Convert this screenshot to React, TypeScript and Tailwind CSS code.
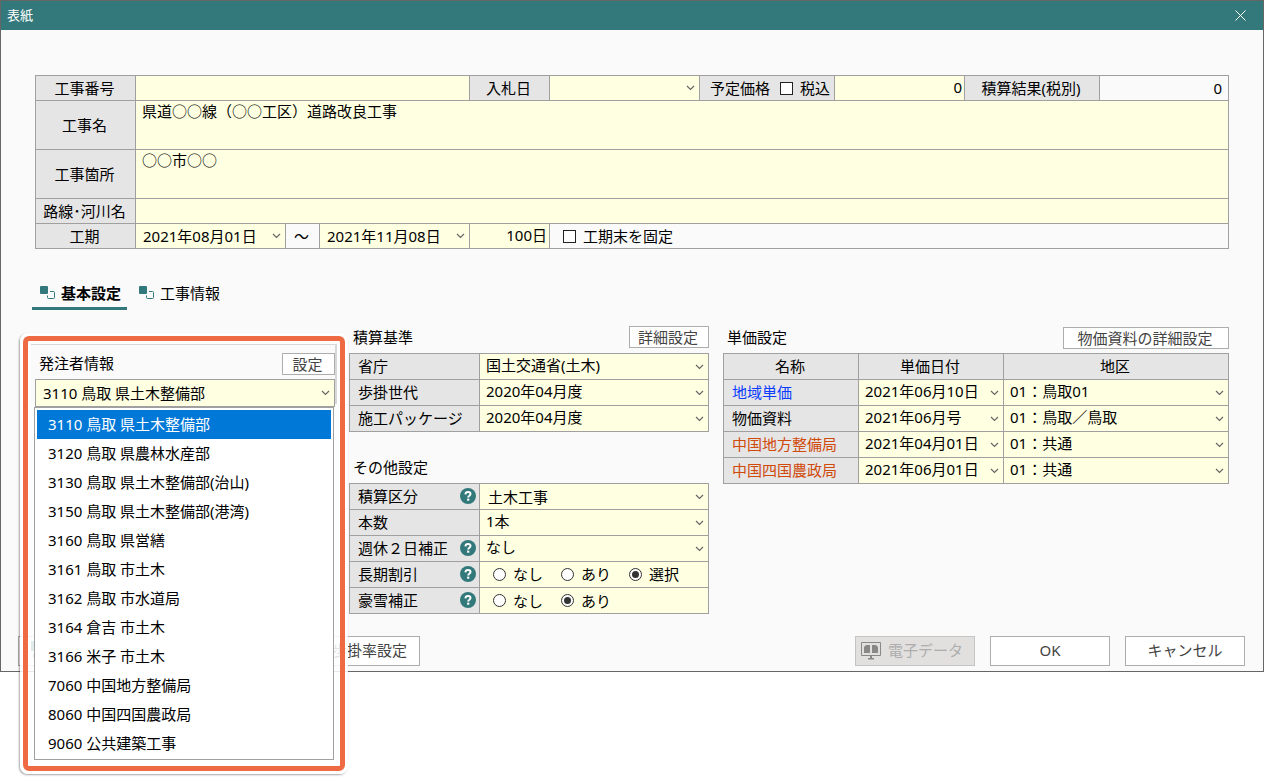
import type { ReactNode } from 'react';

const issuers = [
  '3110 鳥取 県土木整備部',
  '3120 鳥取 県農林水産部',
  '3130 鳥取 県土木整備部(治山)',
  '3150 鳥取 県土木整備部(港湾)',
  '3160 鳥取 県営繕',
  '3161 鳥取 市土木',
  '3162 鳥取 市水道局',
  '3164 倉吉 市土木',
  '3166 米子 市土木',
  '7060 中国地方整備局',
  '8060 中国四国農政局',
  '9060 公共建築工事'
];

const standards = [
  { id: 'ministry', label: '省庁', value: '国土交通省(土木)' },
  { id: 'generation', label: '歩掛世代', value: '2020年04月度' },
  { id: 'package', label: '施工パッケージ', value: '2020年04月度' }
];

const prices = [
  { name: '地域単価', color: 'text-[#0a3cff]', date: '2021年06月10日', area: '01：鳥取01' },
  { name: '物価資料', color: 'text-black', date: '2021年06月号', area: '01：鳥取／鳥取' },
  { name: '中国地方整備局', color: 'text-[#d04a0a]', date: '2021年04月01日', area: '01：共通' },
  { name: '中国四国農政局', color: 'text-[#d04a0a]', date: '2021年06月01日', area: '01：共通' }
];

function Chevron() {
  return (
    <svg className="pointer-events-none absolute right-1 top-1/2 -translate-y-1/2" width="9" height="8" viewBox="0 0 9 8" fill="none" stroke="#666" strokeWidth="1.2">
      <path d="M1 2l3.5 3.5L8 2" />
    </svg>
  );
}

interface PickProps {
  id?: string;
  label?: string;
  value: string;
  options?: string[];
  className?: string;
}

function Pick({ id, label, value, options, className = 'pb-[3px] pl-[6px]' }: PickProps) {
  return (
    <div className="relative h-full w-full bg-[#ffffe1]">
      <select
        id={id}
        aria-label={label}
        defaultValue={value}
        className={`block h-full w-full appearance-none bg-transparent pr-4 outline-none ${className}`}
      >
        {(options ?? [value]).map((o) => (
          <option key={o}>{o}</option>
        ))}
      </select>
      <Chevron />
    </div>
  );
}

function Head({ htmlFor, className = '', children }: { htmlFor?: string; className?: string; children: ReactNode }) {
  return (
    <label htmlFor={htmlFor} className={`flex shrink-0 items-center justify-center bg-[#e5e5e5] pb-px pr-[2px] ${className}`}>
      {children}
    </label>
  );
}

function Check({ label, className = '' }: { label: string; className?: string }) {
  return (
    <label className={`flex items-center gap-[7px] ${className}`}>
      <input type="checkbox" className="size-[13px] appearance-none border border-[#222] bg-white" />
      {label}
    </label>
  );
}

function Radio({ name, label, checked = false }: { name: string; label: string; checked?: boolean }) {
  return (
    <label className="flex w-[68px] items-center gap-[7px]">
      <span className="grid size-[13px] shrink-0 place-items-center rounded-full border border-[#333] bg-white">
        <input type="radio" name={name} defaultChecked={checked} className="size-[7px] appearance-none rounded-full checked:bg-[#333]" />
      </span>
      {label}
    </label>
  );
}

function SmallButton({ className = '', children }: { className?: string; children: ReactNode }) {
  return (
    <button type="button" className={`h-[22px] border border-[#adadad] bg-white pr-[2px] leading-5 text-[#444] ${className}`}>
      {children}
    </button>
  );
}

function Help() {
  return (
    <button type="button" aria-label="ヘルプ" className="mr-[3px]">
      <svg width="16" height="16" viewBox="0 0 16 16">
        <circle cx="8" cy="8" r="8" fill="#33797b" />
        <path d="M5.4 6.4C5.500 4.700 6.600 4 8 4c1.500 0 2.500.8 2.500 2 0 1.700-2.300 1.700-2.300 3.400" fill="none" stroke="#fff" strokeWidth="2" />
        <rect x="7.1" y="10.600" width="2.200" height="2.100" fill="#fff" />
      </svg>
    </button>
  );
}

function SettingRow({ id, label, help = false, children }: { id?: string; label: string; help?: boolean; children: ReactNode }) {
  return (
    <div className="flex h-[25px] gap-px">
      <div className="flex w-[129px] shrink-0 items-center justify-between bg-[#e5e5e5] pb-[2px] pl-2">
        <label htmlFor={id}>{label}</label>
        {help && <Help />}
      </div>
      <div className="flex min-w-0 flex-1 items-center bg-[#ffffe1]">{children}</div>
    </div>
  );
}

function TabIcon() {
  return (
    <svg width="16" height="14" viewBox="0 0 16 14">
      <rect x="0" y="0" width="8" height="8" rx="1" fill="#33797b" />
      <path d="M10 5.500h3.500a1 1 0 0 1 1 1v5a1 1 0 0 1-1 1h-5a1 1 0 0 1-1-1V9.500" fill="none" stroke="#33797b" />
    </svg>
  );
}

function TitleBar() {
  return (
    <header className="flex h-[29px] items-center justify-between bg-[#33797b] pb-px pl-[6px] pr-[17px] text-[13px] text-white">
      <h1>表紙</h1>
      <button type="button" aria-label="閉じる">
        <svg width="11" height="11" viewBox="0 0 11 11" stroke="#fff" strokeWidth="1">
          <path d="M.5.5l10 10M10.500.5l-10 10" />
        </svg>
      </button>
    </header>
  );
}

function ProjectForm() {
  return (
    <section className="flex flex-col gap-px bg-[#a0a0a0] p-px">
      <div className="flex h-6 gap-px">
        <Head htmlFor="number" className="w-[99px]">工事番号</Head>
        <input id="number" className="min-w-0 flex-1 bg-[#ffffe1] px-[6px] outline-none" />
        <Head htmlFor="bid" className="w-[79px]">入札日</Head>
        <div className="w-[149px]">
          <Pick id="bid" value="" />
        </div>
        <div className="flex w-[134px] items-center justify-between bg-[#e5e5e5] pl-[10px] pr-1">
          <label htmlFor="planned">予定価格</label>
          <Check label="税込" />
        </div>
        <input id="planned" defaultValue="0" className="w-[129px] bg-[#ffffe1] px-[2px] pb-[2px] text-right outline-none" />
        <Head className="w-[134px]">積算結果(税別)</Head>
        <output className="flex w-32 items-center justify-end bg-[#fafafa] pr-[6px]">0</output>
      </div>
      <div className="flex h-12 gap-px">
        <Head htmlFor="title" className="w-[99px]">工事名</Head>
        <textarea id="title" defaultValue="県道○○線（○○工区）道路改良工事" className="min-w-0 flex-1 resize-none bg-[#ffffe1] px-[6px] leading-5 outline-none" />
      </div>
      <div className="flex h-12 gap-px">
        <Head htmlFor="place" className="w-[99px]">工事箇所</Head>
        <textarea id="place" defaultValue="○○市○○" className="min-w-0 flex-1 resize-none bg-[#ffffe1] px-[6px] leading-5 outline-none" />
      </div>
      <div className="flex h-6 gap-px">
        <Head htmlFor="route" className="w-[99px]">路線･河川名</Head>
        <input id="route" className="min-w-0 flex-1 bg-[#ffffe1] px-[6px] outline-none" />
      </div>
      <div className="flex h-6 gap-px">
        <Head htmlFor="from" className="w-[99px]">工期</Head>
        <div className="w-[149px]">
          <Pick id="from" value="2021年08月01日" className="pl-[7px]" />
        </div>
        <span className="flex w-[33px] items-center justify-center bg-[#fafafa] pr-[2px]">～</span>
        <div className="w-[149px]">
          <Pick label="工期終了日" value="2021年11月08日" className="pl-[7px]" />
        </div>
        <input aria-label="日数" defaultValue="100日" className="w-[79px] bg-[#ffffe1] px-[2px] pb-[2px] text-right outline-none" />
        <Check label="工期末を固定" className="flex-1 bg-[#fafafa] pl-[13px]" />
      </div>
    </section>
  );
}

function IssuerPanel() {
  return (
    <section className="relative w-[300px] shrink-0 pt-[29px]">
      {/* highlighted frame around the open list */}
      <div className="absolute -left-[15px] top-[10px] z-10 h-[441px] w-[328px] rounded-lg border-[3px] border-white/85 shadow-[-1px_1px_2px_rgba(0,0,0,0.35)]">
        <div className="h-full rounded-md border-[5px] border-[#ee6a42] bg-white/85 bg-clip-padding p-[3px]">
          <div className="h-[60px] border-r-2 border-t border-[#d8d8d8] bg-[#fafafa]" />
        </div>
      </div>
      <div className="relative z-20">
        <div className="flex items-center justify-between pb-1 pl-1">
          <h2 className="pb-px">発注者情報</h2>
          <SmallButton className="w-[53px]">設定</SmallButton>
        </div>
        <div className="h-7 border border-[#a0a0a0]">
          <Pick label="発注者" value={issuers[0]} options={issuers} className="pb-px pl-[7px]" />
        </div>
        <ul role="listbox" aria-label="発注者一覧" className="absolute -left-px top-[55px] w-[300px] border border-[#a0a0a0] bg-white px-[2px] pb-px pt-[2px]">
          {issuers.map((name, i) => (
            <li
              key={name}
              role="option"
              aria-selected={i === 0}
              className={`h-[29px] pl-[11px] leading-7 ${i === 0 ? 'bg-[#0078d7] text-white' : ''}`}
            >
              {name}
            </li>
          ))}
        </ul>
      </div>
    </section>
  );
}

function StandardPanel() {
  return (
    <div className="w-[360px] shrink-0">
      <section>
        <div className="flex h-[30px] items-start justify-between pl-1 pt-[3px]">
          <h2>積算基準</h2>
          <SmallButton className="w-20">詳細設定</SmallButton>
        </div>
        <div className="flex flex-col gap-px bg-[#a0a0a0] p-px">
          {standards.map((s) => (
            <SettingRow key={s.id} id={s.id} label={s.label}>
              <Pick id={s.id} value={s.value} />
            </SettingRow>
          ))}
        </div>
      </section>
      <section className="pt-6">
        <h2 className="h-[27px] pl-1">その他設定</h2>
        <div className="flex flex-col gap-px bg-[#a0a0a0] p-px">
          <SettingRow id="kind" label="積算区分" help>
            <Pick id="kind" value="土木工事" className="pl-2" />
          </SettingRow>
          <SettingRow id="count" label="本数">
            <Pick id="count" value="1本" />
          </SettingRow>
          <SettingRow id="weekend" label="週休２日補正" help>
            <Pick id="weekend" value="なし" />
          </SettingRow>
          <SettingRow label="長期割引" help>
            <div className="flex pb-px pl-[13px]">
              <Radio name="discount" label="なし" />
              <Radio name="discount" label="あり" />
              <Radio name="discount" label="選択" checked />
            </div>
          </SettingRow>
          <SettingRow label="豪雪補正" help>
            <div className="flex pl-[13px]">
              <Radio name="snow" label="なし" />
              <Radio name="snow" label="あり" checked />
            </div>
          </SettingRow>
        </div>
      </section>
    </div>
  );
}

function PricePanel() {
  return (
    <section className="min-w-0 flex-1">
      <div className="flex h-[30px] items-start justify-between pl-1 pt-[3px]">
        <h2>単価設定</h2>
        <SmallButton className="mt-px w-[166px]">物価資料の詳細設定</SmallButton>
      </div>
      <table className="w-full table-fixed border-collapse">
        <thead>
          <tr className="h-[26px] bg-[#e5e5e5]">
            <th className="w-[135px] border border-[#a0a0a0] p-0 pb-[2px] pr-[2px] font-normal">名称</th>
            <th className="w-[145px] border border-[#a0a0a0] p-0 pb-[2px] pr-[2px] font-normal">単価日付</th>
            <th className="border border-[#a0a0a0] p-0 pb-[2px] pr-[2px] font-normal">地区</th>
          </tr>
        </thead>
        <tbody>
          {prices.map((p) => (
            <tr key={p.name} className="h-[26px]">
              <th className={`border border-[#a0a0a0] bg-[#e5e5e5] pb-[2px] pl-2 text-left font-normal ${p.color}`}>{p.name}</th>
              <td className="h-[26px] border border-[#a0a0a0] p-0">
                <Pick label={`${p.name} 単価日付`} value={p.date} />
              </td>
              <td className="h-[26px] border border-[#a0a0a0] p-0">
                <Pick label={`${p.name} 地区`} value={p.area} />
              </td>
            </tr>
          ))}
        </tbody>
      </table>
    </section>
  );
}

function Footer() {
  return (
    <footer className="flex gap-[15px] pb-[5px] pl-[17px] pr-[18px] pt-[22px]">
      <button type="button" className="flex h-[30px] w-[402px] items-center justify-between border border-[#adadad] bg-white px-3 pb-[3px] text-[#444]">
        <svg width="16" height="18" viewBox="0 0 16 18">
          <path d="M0 0h14v10H0zM2 13h9v4H2z" fill="#33797b" />
        </svg>
        歩掛率設定
      </button>
      <button type="button" disabled className="ml-auto flex h-[30px] w-[120px] items-center gap-[7px] border border-[#c4c4c4] bg-[#e1e0df] pl-[5px] text-[#adadad]">
        <svg width="20" height="18" viewBox="0 0 20 18">
          <path d="M.5.5h19v13H.5z" fill="none" stroke="#888" />
          <path d="M3 5l2-2h4v8H3zM11 3h4l2 2v6h-6zM9 14h2v2h2v1.500H7V16h2z" fill="#888" />
        </svg>
        <span className="pb-[3px]">電子データ</span>
      </button>
      <button type="button" className="h-[30px] w-[120px] border border-[#adadad] bg-white pb-[3px] text-[#444]">OK</button>
      <button type="button" className="h-[30px] w-[120px] border border-[#adadad] bg-white pb-[3px] text-[#444]">キャンセル</button>
    </footer>
  );
}

export default function App() {
  return (
    <div className="min-h-screen bg-white">
      <main className="border border-[#666] bg-[#fafafa] font-['Noto_Sans','Noto_Sans_CJK_JP',sans-serif] text-[15px] leading-[22px] text-black">
        <TitleBar />
        <div className="px-[34px] pt-[45px]">
          <ProjectForm />
        </div>
        <nav role="tablist" className="flex pl-[31px] pt-[33px]">
          <button type="button" role="tab" aria-selected="true" className="flex h-7 items-center gap-[5px] border-b-[3px] border-[#33797b] pb-[3px] pl-2 pr-[6px] font-bold">
            <TabIcon />
            基本設定
          </button>
          <button type="button" role="tab" aria-selected="false" className="flex h-7 items-center gap-[5px] border-b-[3px] border-transparent pb-[3px] pl-3">
            <TabIcon />
            工事情報
          </button>
        </nav>
        <div className="flex gap-[14px] px-[34px] pt-[13px]">
          <IssuerPanel />
          <StandardPanel />
          <PricePanel />
        </div>
        <Footer />
      </main>
    </div>
  );
}
